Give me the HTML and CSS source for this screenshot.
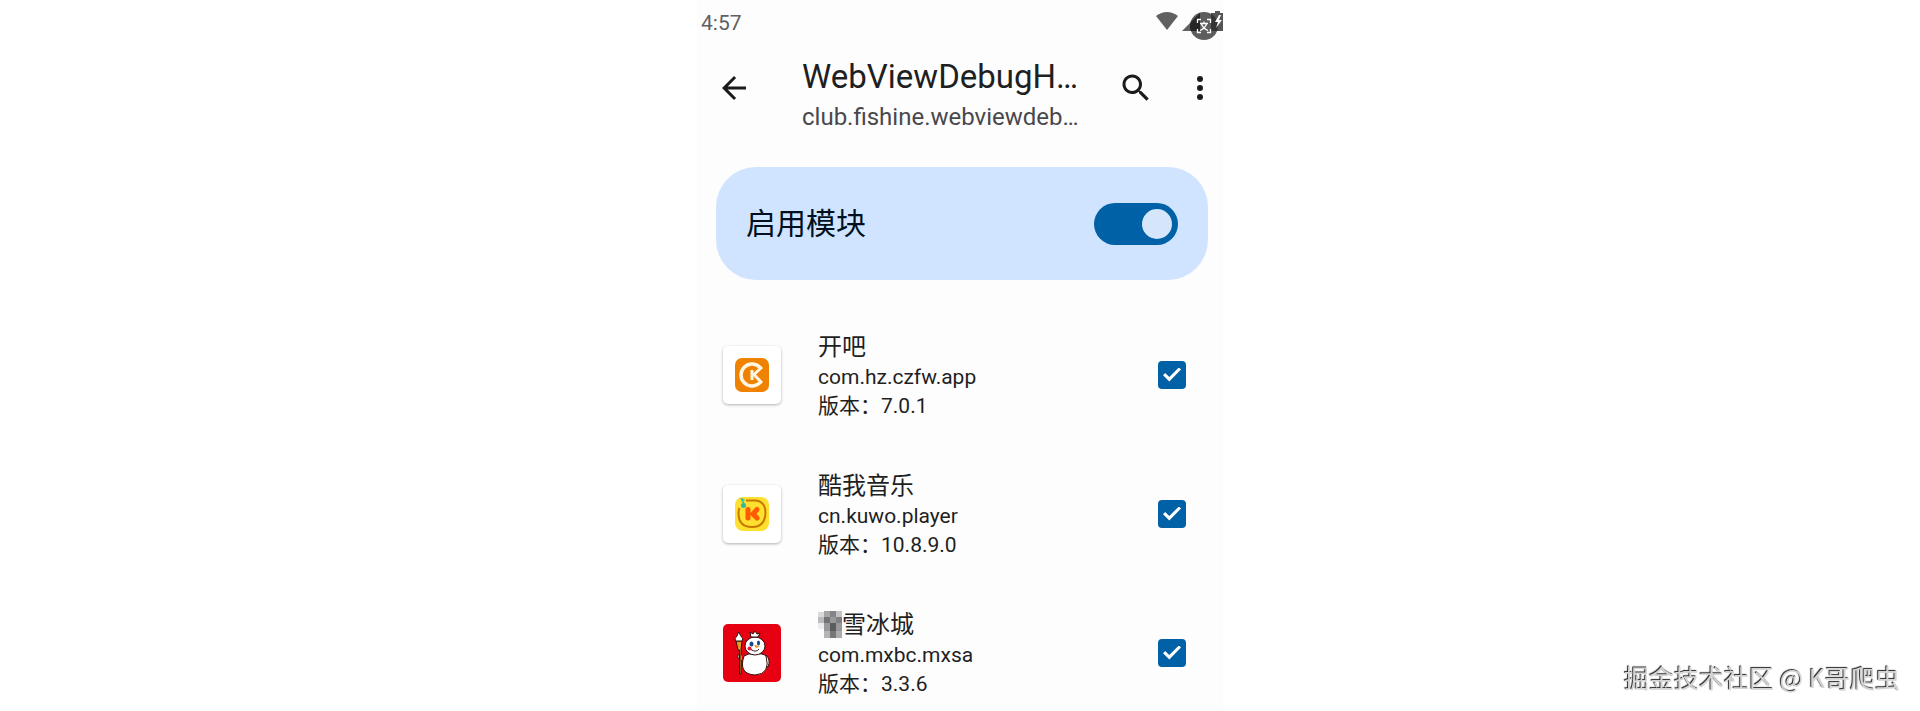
FILE: index.html
```html
<!DOCTYPE html>
<html lang="zh-CN">
<head>
  <meta charset="UTF-8" />
  <meta name="viewport" content="width=device-width, initial-scale=1.0" />
  <title>WebViewDebugHook</title>
  <link rel="stylesheet" href="styles.css">
</head>
<body>
  <main class="phone">
    <div class="status-bar">
      <span>4:57</span>
      <svg class="status-icons" width="68" height="30" viewBox="0 0 68 30" aria-hidden="true">
        <path d="M1 5 Q12 -3 23 5 L12 19 Z" fill="#606062" />
        <path d="M27 20 L45 2 V20 Z" fill="#606062" />
        <path d="M58 2 H60 V0 H65 V2 H68 V20 H56 V2 Z" fill="#555557" />
        <circle cx="49" cy="15" r="14" fill="#2a2a2c" fill-opacity="0.76" />
        <path d="M38 9 L45 2 V20 H36 Q33 14 38 9 Z" fill="#222" fill-opacity="0.75" />
        <path d="M64 4 L60 11 H63 L61 17 L67 9 H64 L66 4 Z" fill="#fff" />
        <g fill="none" stroke="#fff" stroke-width="1.3">
          <path d="M42.500 12 V8.500 H46 M52 8.500 H55.500 V12 M55.500 18 V21.500 H52 M46 21.500 H42.500 V18" />
          <path d="M45 12.500 H53 M49 10.500 V12.500 M46.500 13 Q48 17.500 53 19.500 M51.500 13 Q50 17.500 45 19.500" />
        </g>
      </svg>
    </div>

    <header class="toolbar">
      <button class="icon-btn" aria-label="返回">
        <svg viewBox="0 0 24 24"><path d="M20 11H7.830l5.590-5.590L12 4l-8 8 8 8 1.410-1.410L7.830 13H20v-2z" /></svg>
      </button>
      <div class="heading">
        <h1>WebViewDebugH…</h1>
        <p>club.fishine.webviewdeb…</p>
      </div>
      <div class="actions">
        <button class="icon-btn" aria-label="搜索">
          <svg viewBox="0 0 24 24"><path d="M15.500 14h-.790l-.280-.270C15.410 12.590 16 11.110 16 9.500 16 5.910 13.090 3 9.500 3S3 5.910 3 9.500 5.910 16 9.500 16c1.610 0 3.090-.590 4.230-1.570l.270.280v.790l5 4.990L20.490 19l-4.990-5zm-6 0C7.010 14 5 11.990 5 9.500S7.010 5 9.500 5 14 7.010 14 9.500 11.990 14 9.500 14z" /></svg>
        </button>
        <button class="icon-btn" aria-label="更多">
          <svg viewBox="0 0 24 24"><circle cx="12" cy="6" r="2" /><circle cx="12" cy="12" r="2" /><circle cx="12" cy="18" r="2" /></svg>
        </button>
      </div>
    </header>

    <label class="module-card">
      <span>启用模块</span>
      <input type="checkbox" role="switch" class="switch" checked />
    </label>

    <ul class="app-list">
      <li>
        <label class="app">
          <span class="app-icon">
            <svg viewBox="0 0 58 58">
              <rect x="12" y="12" width="34" height="34" rx="7" fill="#ef8200" />
              <path d="M37.500 22 A11 11 0 1 0 37.500 36" fill="none" stroke="#fff6e2" stroke-width="3.500" />
              <path d="M29 24 V34" fill="none" stroke="#fff6e2" stroke-width="3" />
              <path d="M39 21 L31 28.500 L39 37" fill="none" stroke="#fff6e2" stroke-width="3" />
            </svg>
          </span>
          <span class="app-text">
            <span class="app-name">开吧</span>
            <span>com.hz.czfw.app</span>
            <span>版本：7.0.1</span>
          </span>
          <input type="checkbox" class="check" checked />
        </label>
      </li>
      <li>
        <label class="app">
          <span class="app-icon">
            <svg viewBox="0 0 58 58">
              <rect x="12" y="12" width="34" height="34" rx="8" fill="#ffe02e" />
              <path d="M23 15.500 H32 Q42.500 16 42.500 28 Q42 42 29 42 Q15.500 42 15.500 28 Q15.500 25 16.500 23" fill="none" stroke="#c87800" stroke-width="2" />
              <path d="M25 24.500 V33 M34 24.500 L30 29 L34 33" fill="none" stroke="#ff5a00" stroke-width="5" stroke-linecap="round" stroke-linejoin="round" />
              <circle cx="20.500" cy="20.500" r="2.500" fill="#35b8a0" />
              <path d="M21.500 20 L18.500 14 L21.500 15" fill="none" stroke="#35b8a0" stroke-width="1.500" />
            </svg>
          </span>
          <span class="app-text">
            <span class="app-name">酷我音乐</span>
            <span>cn.kuwo.player</span>
            <span>版本：10.8.9.0</span>
          </span>
          <input type="checkbox" class="check" checked />
        </label>
      </li>
      <li>
        <label class="app">
          <span class="app-icon red">
            <svg viewBox="0 0 58 58">
              <g stroke="#30100c" stroke-width="1">
                <path d="M19 31 Q14 29 15 34 L19 37 M43 31 Q48 36 45 43 L42 42" fill="#fff" />
                <path d="M21 32 Q25 29 32 30 Q40 29 43 32 Q48 50 32 51 Q15 50 21 32 Z" fill="#fff" />
                <ellipse cx="32" cy="22" rx="10" ry="9" fill="#fff" />
                <path d="M28 13 L27 8 L30 10 L32 7 L34 10 L37 9 L35 13 Z" fill="#fff" />
                <path d="M13 17 H19 L18 26 V50 H16.500 V26 H15 Z" fill="#e79b20" />
                <path d="M12.500 17 Q11 14 14 12 L15.500 8 L18 12 Q21 15 19 17 Z" fill="#fff" />
              </g>
              <ellipse cx="28.500" cy="20" rx="2" ry="2.500" fill="#17458c" />
              <ellipse cx="35.500" cy="19" rx="1.500" ry="2.500" fill="#17458c" />
              <path d="M31 21 L37 22 L33 24 Z" fill="#f08a18" />
              <circle cx="26.500" cy="24.500" r="2" fill="#e51b35" />
              <path d="M28 25.500 Q33 29 36 25" fill="none" stroke="#30100c" />
            </svg>
          </span>
          <span class="app-text">
            <span class="app-name">
              <svg class="mosaic" viewBox="0 0 24 28" shape-rendering="crispEdges" aria-hidden="true">
                <path d="M0 1h6v6H0z" fill="#d9d9dc" />
                <path d="M6 0h6v6H6z" fill="#a6a6a9" />
                <path d="M12 0h6v6h-6z" fill="#858588" />
                <path d="M18 0h6v6h-6z" fill="#c3c3c6" />
                <path d="M0 6h6v6H0z" fill="#bcbcbf" />
                <path d="M6 6h6v6H6z" fill="#727275" />
                <path d="M12 6h6v6h-6z" fill="#98989b" />
                <path d="M18 6h6v6h-6z" fill="#808083" />
                <path d="M0 12h6v6H0z" fill="#ececef" />
                <path d="M6 12h6v8H6z" fill="#99999c" />
                <path d="M12 12h6v8h-6z" fill="#5c5c5f" />
                <path d="M18 12h6v8h-6z" fill="#98989b" />
                <path d="M6 20h6v7H6z" fill="#b5b5b8" />
                <path d="M12 20h6v7h-6z" fill="#77777a" />
                <path d="M18 20h6v7h-6z" fill="#ababae" />
              </svg>雪冰城</span>
            <span>com.mxbc.mxsa</span>
            <span>版本：3.3.6</span>
          </span>
          <input type="checkbox" class="check" checked />
        </label>
      </li>
    </ul>
  </main>

  <div class="watermark">掘金技术社区 @ K哥爬虫</div>
</body>
</html>
```
FILE: styles.css
```css
* {
  margin: 0;
  padding: 0;
  box-sizing: border-box;
}

body {
  font-family: Roboto, "Noto Sans CJK SC", sans-serif;
  background-color: #fff;
  color: #1f1f22;
  height: 100vh;
  overflow: hidden;
}

.phone {
  max-width: 526px;
  min-height: 100vh;
  margin: auto;
  padding-left: 4px;
  background: #fdfdfe;
}

.status-bar {
  display: flex;
  justify-content: space-between;
  height: 57px;
  padding-top: 11px;
  font-size: 21px;
  line-height: 24px;
  color: #606062;
}

.toolbar {
  display: flex;
  align-items: flex-start;
  padding: 0 5px 0 15px;
}

.icon-btn {
  width: 36px;
  height: 62px;
  display: flex;
  align-items: center;
  border: none;
  background: none;
  cursor: pointer;
}

.icon-btn svg {
  width: 36px;
  height: 36px;
  fill: #1b1b1e;
}

.heading {
  flex: 1;
  min-width: 0;
  margin: 0 30px 0 50px;
  line-height: 40px;
  white-space: nowrap;
}

.heading h1 {
  font-size: 33px;
  font-weight: 400;
}

.heading p {
  font-size: 24px;
  color: #48484b;
}

.actions {
  display: flex;
  gap: 28px;
}

.module-card {
  display: flex;
  align-items: center;
  justify-content: space-between;
  margin: 30px 15px 25px;
  padding: 34px 30px;
  border-radius: 40px;
  background: #d0e4ff;
  color: #001020;
  font-size: 30px;
  line-height: 45px;
}

.switch {
  appearance: none;
  display: flex;
  justify-content: flex-end;
  width: 84px;
  height: 42px;
  padding: 6px;
  border-radius: 21px;
  background: #0061a6;
}

.switch::before {
  content: "";
  width: 30px;
  height: 30px;
  border-radius: 50%;
  background: #d5e6fb;
}

.switch:not(:checked) {
  justify-content: flex-start;
  background: #73777f;
}

.app-list {
  list-style: none;
}

.app {
  display: flex;
  align-items: center;
  height: 139px;
  padding: 0 37px 0 22px;
}

.app-icon {
  width: 58px;
  height: 58px;
  border-radius: 5px;
  background: #fff;
  box-shadow: 0 1px 3px rgba(0, 0, 0, 0.3);
}

.app-icon.red {
  background: #e60012;
  box-shadow: none;
}

.app-icon svg {
  display: block;
}

.app-text {
  flex: 1;
  display: flex;
  flex-direction: column;
  margin-left: 37px;
  padding-top: 3px;
  font-size: 21px;
  line-height: 29px;
}

.app-name {
  display: flex;
  align-items: center;
  font-size: 24px;
  line-height: 32px;
}

.mosaic {
  width: 24px;
  height: 28px;
}

.check {
  appearance: none;
  display: grid;
  place-items: center;
  width: 28px;
  height: 28px;
  border-radius: 4px;
  border: 2px solid #0061a6;
}

.check:checked {
  background: #0061a6;
}

.check:checked::before {
  content: "";
  width: 18px;
  height: 14px;
  background: #fff;
  clip-path: polygon(0 55%, 12% 40%, 35% 68%, 88% 0, 100% 14%, 35% 100%);
}

.watermark {
  position: fixed;
  right: 20px;
  bottom: 16px;
  font-family: "Noto Sans CJK SC", sans-serif;
  font-size: 25px;
  line-height: 36px;
  color: #d4d4d4;
  text-shadow: -1px -1px 1px #222;
}
```
